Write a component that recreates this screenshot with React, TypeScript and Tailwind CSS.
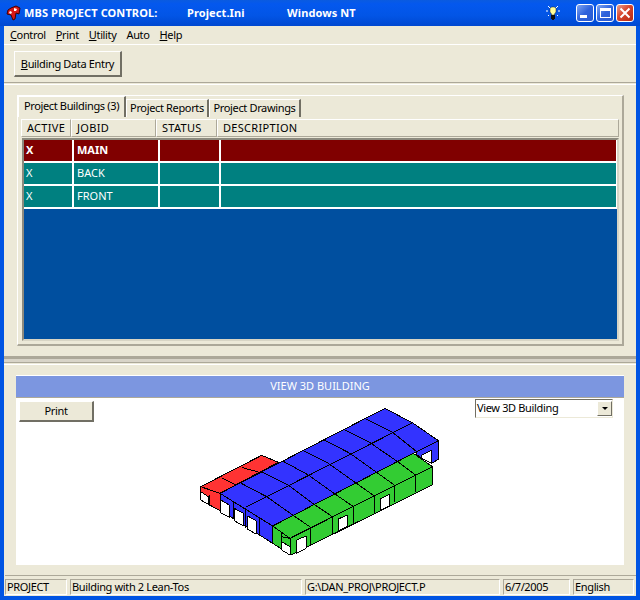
import React from 'react';

const font = "font-['Noto_Sans',sans-serif]";

const raised = 'border border-t-white border-l-white border-r-[#716f64] border-b-[#716f64]';

const topPts = [[150, 248], [215, 215], [278, 183], [340, 152], [403, 120], [465, 90], [527, 57]];
const ridgePts = [[230, 290], [295, 255], [355, 225], [415, 190], [480, 160], [540, 128], [605, 95]];
const frontPts = [[305, 343], [368, 310], [432, 280], [495, 247], [557, 215], [620, 183]];
const greenPts = [[362, 382], [427, 350], [490, 320], [553, 288], [613, 255], [677, 225]];

const P: React.FC<{ d: string; f: string }> = ({ d, f }) => (
  <polygon points={d} fill={f} stroke="#000" strokeWidth={3} strokeLinejoin="round" />
);

const Building = () => (
  <svg width={260} height={160} viewBox="0 0 780 480" className="block shrink-0" shapeRendering="crispEdges">
    {/* red lean-to */}
    <P d="32,260 215,166 265,187 90,280" f="#ff3333" />
    <P d="32,260 90,280 90,332 32,300" f="#ff3333" />
    <P d="32,275 55,290 55,313 32,300" f="#fff" />
    <path d="M58,285V318M95,233L150,262M157,203L212,218" stroke="#000" strokeWidth={3} fill="none" />
    {/* blue end wall */}
    <P d="680,155 745,122 745,178 725,190 680,165" f="#3333ff" />
    <P d="695,165 725,150 725,190 695,175" f="#fff" />
    {/* blue roof */}
    <P d="90,280 585,25 670,70 745,122 680,155 248,378" f="#3333ff" />
    <path d="M167,322L668,68" stroke="#000" strokeWidth={3} fill="none" />
    {topPts.map((t, i) => (
      <polyline
        key={i}
        points={`${t} ${ridgePts[i]} ${frontPts[i] ?? '680,155'}`}
        stroke="#000"
        strokeWidth={3}
        fill="none"
      />
    ))}
    {/* blue side wall */}
    <P d="90,280 248,378 248,430 90,330" f="#3333ff" />
    <P d="92,300 118,315 118,352 92,338" f="#fff" />
    <P d="133,325 160,340 160,378 133,362" f="#fff" />
    <P d="173,348 198,362 198,402 173,388" f="#fff" />
    <path d="M130,302V358M167,325V385M207,350V408" stroke="#000" strokeWidth={3} fill="none" />
    {/* green lean-to */}
    <P d="248,378 670,160 727,200 300,415" f="#33cc33" />
    <P d="300,415 727,200 727,255 303,465" f="#33cc33" />
    <P d="248,378 300,415 303,465 248,430" f="#33cc33" />
    <P d="275,425 300,440 300,465 275,450" f="#fff" />
    <path d="M275,397V425M275,410L300,415" stroke="#000" strokeWidth={3} fill="none" />
    {frontPts.map((t, i) => (
      <line key={i} x1={t[0]} y1={t[1]} x2={greenPts[i][0]} y2={greenPts[i][1]} stroke="#000" strokeWidth={3} />
    ))}
    {greenPts.map((t, i) => (
      <line key={i} x1={t[0]} y1={t[1]} x2={t[0]} y2={t[1] + 52} stroke="#000" strokeWidth={3} />
    ))}
    <P d="320,420 348,408 348,445 320,460" f="#fff" />
    <P d="445,357 472,345 472,380 445,393" f="#fff" />
    <P d="570,297 598,283 598,318 570,332" f="#fff" />
  </svg>
);

const AppIcon = () => (
  <svg width={16} height={16} viewBox="0 0 16 16" className="shrink-0">
    <path d="M6 3L11 1L15 3L14 9L11 8L10 14L8 15L6 10L2 9L3 5Z" fill="#d81818" stroke="#400" strokeWidth={1} />
    <path d="M9 3L12 4L11 6L9 6Z" fill="#fff" />
    <path d="M5 6L7 7L6 9L4 8Z" fill="#fff" />
  </svg>
);

const Bulb = () => (
  <svg width={16} height={16} viewBox="0 0 16 16" className="shrink-0">
    <path d="M1 6H3M13 6H15M3 1L5 3M13 1L11 3M3 11L4 10M13 11L12 10" stroke="#fff" strokeWidth={1} />
    <path d="M5 3.5L6.5 2H9.5L11 3.5V7L9.5 9V10H6.5V9L5 7Z" fill="#ffff99" stroke="#222" strokeWidth={0.5} />
    <rect x={6} y={10} width={4} height={4} fill="#111" />
    <rect x={7} y={14} width={2} height={1} fill="#111" />
  </svg>
);

const WinButton: React.FC<{ kind: 'min' | 'max' | 'close' }> = ({ kind }) => (
  <div
    className={
      'w-[18px] h-[18px] rounded-[3px] border border-white flex items-center justify-center relative ' +
      (kind === 'close'
        ? 'bg-[linear-gradient(135deg,#e8a090,#d8452c_45%,#b52a12)]'
        : 'bg-[linear-gradient(135deg,#7fa5f2,#2f63dc_50%,#2a5ad0)]')
    }
  >
    {kind === 'min' && <div className="absolute left-[3px] bottom-[3px] w-[7px] h-[3px] bg-white" />}
    {kind === 'max' && (
      <div className="w-[11px] h-[10px] border border-white border-t-[3px]" />
    )}
    {kind === 'close' && (
      <svg width={12} height={12} viewBox="0 0 12 12">
        <path d="M1.5 1.5L10.5 10.5M10.5 1.5L1.5 10.5" stroke="#fff" strokeWidth={2} />
      </svg>
    )}
  </div>
);

const U: React.FC<{ children: React.ReactNode }> = ({ children }) => <span className="underline">{children}</span>;

const rows = [
  { active: 'X', job: 'MAIN', bg: 'bg-[#800000]', bold: true },
  { active: 'X', job: 'BACK', bg: 'bg-[#008080]', bold: false },
  { active: 'X', job: 'FRONT', bg: 'bg-[#008080]', bold: false },
];

const headers = [
  { label: 'ACTIVE', w: 'w-[50px]' },
  { label: 'JOBID', w: 'w-[85px]' },
  { label: 'STATUS', w: 'w-[61px]' },
  { label: 'DESCRIPTION', w: 'flex-1' },
];

const StatusCell: React.FC<{ w: string; children: React.ReactNode }> = ({ w, children }) => (
  <div className={`${w} h-[16px] border border-t-[#aca899] border-l-[#aca899] border-r-white border-b-white flex items-center pl-px overflow-hidden whitespace-nowrap`}>
    {children}
  </div>
);

const inactiveTab = 'h-[18px] border-t border-l border-t-white border-l-white border-r-2 border-r-[#716f64] flex items-center justify-center whitespace-nowrap';

export default function App() {
  return (
    <div className={`w-[640px] h-[600px] overflow-hidden bg-[#0054e3] px-[4px] pb-[4px] text-[11px] tracking-[-0.35px] text-black ${font} flex flex-col`}>
      {/* title bar */}
      <div className="-mx-[4px] px-[5px] h-[26px] shrink-0 flex items-center bg-[linear-gradient(180deg,#0a5be0,#0458ee_15%,#0255e6_60%,#0048d0)] text-white font-bold text-[11px] tracking-[0.1px] whitespace-nowrap">
        <AppIcon />
        <span className="ml-[3px] w-[163px]">MBS PROJECT CONTROL:</span>
        <span className="w-[100px]">Project.Ini</span>
        <span>Windows NT</span>
        <div className="flex-1" />
        <Bulb />
        <div className="ml-[15px] flex gap-[2px] mr-[1px]">
          <WinButton kind="min" />
          <WinButton kind="max" />
          <WinButton kind="close" />
        </div>
      </div>

      <div className="flex-1 min-h-0 bg-[#ece9d8] flex flex-col">
        {/* menu */}
        <div className="h-[18px] shrink-0 flex items-center pl-[6px] gap-[10px] whitespace-nowrap">
          <span><U>C</U>ontrol</span>
          <span><U>P</U>rint</span>
          <span><U>U</U>tility</span>
          <span>Auto</span>
          <span><U>H</U>elp</span>
        </div>
        <div className="h-px bg-white shrink-0" />

        {/* toolbar */}
        <div className="h-[38px] shrink-0 border-b border-b-[#aca899] pl-[10px] pt-[6px]">
          <div className={`w-[108px] h-[26px] pt-px ${raised} border-r-2 border-b-2 flex items-center justify-center whitespace-nowrap`}>
            <span><U>B</U>uilding Data Entry</span>
          </div>
        </div>
        <div className="h-px shrink-0" />

        {/* project panel */}
        <div className="shrink-0 border-t border-t-white pl-[13px] pt-[10px]">
          <div className="h-[251px] w-[607px] border-t border-l border-t-white border-l-white border-r-2 border-b-2 border-r-[#aca899] border-b-[#aca899] flex flex-col">
            {/* tabs */}
            <div className="h-[21px] shrink-0 flex items-end">
              <div className="h-[21px] w-[108px] pb-[2px] border-t border-l border-t-white border-l-white border-r-2 border-r-[#716f64] flex items-center justify-center whitespace-nowrap">
                Project Buildings (3)
              </div>
              <div className={`${inactiveTab} w-[83px]`}>Project Reports</div>
              <div className={`${inactiveTab} w-[92px]`}>Project Drawings</div>
            </div>
            {/* grid header */}
            <div className="h-[18px] mt-[2px] shrink-0 flex ml-[3px] mr-[3px] tracking-[0.3px]">
              {headers.map(h => (
                <div key={h.label} className={`${h.w} h-[18px] border-t border-l border-t-white border-l-white border-r border-b border-r-[#aca899] border-b-[#aca899] flex items-center pl-[5px] whitespace-nowrap`}>
                  {h.label}
                </div>
              ))}
            </div>
            {/* grid */}
            <div className="h-[203px] mt-px shrink-0 ml-[4px] mr-[3px] border-2 border-t-[#8c8a7e] border-l-[#8c8a7e] border-r-[#d8d5c5] border-b-[#d8d5c5] bg-[#004f9f] flex flex-col">
              {rows.map(r => (
                <div key={r.job} className="h-[23px] shrink-0 flex gap-[2px] border-b-[2px] border-b-white pr-px bg-white">
                  <div className={`w-[48px] ${r.bg} text-white flex items-center pl-[2px] ${r.bold ? 'font-bold' : ''}`}>{r.active}</div>
                  <div className={`w-[84px] ${r.bg} text-white flex items-center pl-[3px] tracking-normal ${r.bold ? 'font-bold' : ''}`}>{r.job}</div>
                  <div className={`w-[59px] ${r.bg}`} />
                  <div className={`flex-1 ${r.bg}`} />
                </div>
              ))}
            </div>
          </div>
        </div>

        {/* splitter */}
        <div className="shrink-0 mt-[10px] h-[7px] bg-[#d8d4c8] border-t-[3px] border-t-[#aca899] border-b border-b-[#aca899]" />
        <div className="h-px mt-px bg-white shrink-0" />

        {/* 3D view */}
        <div className="h-[200px] shrink-0 pl-[12px] pt-[10px]">
          <div className="w-[608px] h-[190px] flex flex-col bg-white">
            <div className="h-[23px] shrink-0 bg-[#7c96e0] border-t border-t-white border-b border-b-[#aca899] flex items-center justify-center text-white tracking-normal">
              VIEW 3D BUILDING
            </div>
            <div className="flex-1 min-h-0 flex items-start overflow-hidden">
              <div className={`ml-[3px] mt-[3px] w-[75px] h-[21px] shrink-0 bg-[#ece9d8] ${raised} border-r-2 border-b-2 flex items-center justify-center`}>
                Print
              </div>
              <div className="ml-[96px] mt-[2px]">
                <Building />
              </div>
              <div className="ml-[25px] w-[138px] h-[19px] shrink-0 mt-px border border-t-[#716f64] border-l-[#716f64] border-r-[#ece9d8] border-b-[#ece9d8] flex items-center pl-px">
                <span className="flex-1 whitespace-nowrap">View 3D Building</span>
                <div className={`w-[15px] h-[15px] bg-[#ece9d8] ${raised} flex items-center justify-center`}>
                  <div className="w-0 h-0 border-l-[3px] border-r-[3px] border-t-[3px] border-l-transparent border-r-transparent border-t-black" />
                </div>
              </div>
            </div>
          </div>
        </div>

        {/* status bar */}
        <div className="flex-1 min-h-0 flex flex-col justify-end pb-px pl-px">
          <div className="h-px bg-[#aca899] mb-[3px]" />
          <div className="h-[16px] flex gap-[3px] items-start">
            <StatusCell w="w-[62px]">PROJECT</StatusCell>
            <StatusCell w="w-[232px]">Building with 2 Lean-Tos</StatusCell>
            <StatusCell w="w-[195px]">{'G:\\DAN_PROJ\\PROJECT.P'}</StatusCell>
            <StatusCell w="w-[67px]">6/7/2005</StatusCell>
            <StatusCell w="w-[61px]">English</StatusCell>
          </div>
        </div>
      </div>
    </div>
  );
}
